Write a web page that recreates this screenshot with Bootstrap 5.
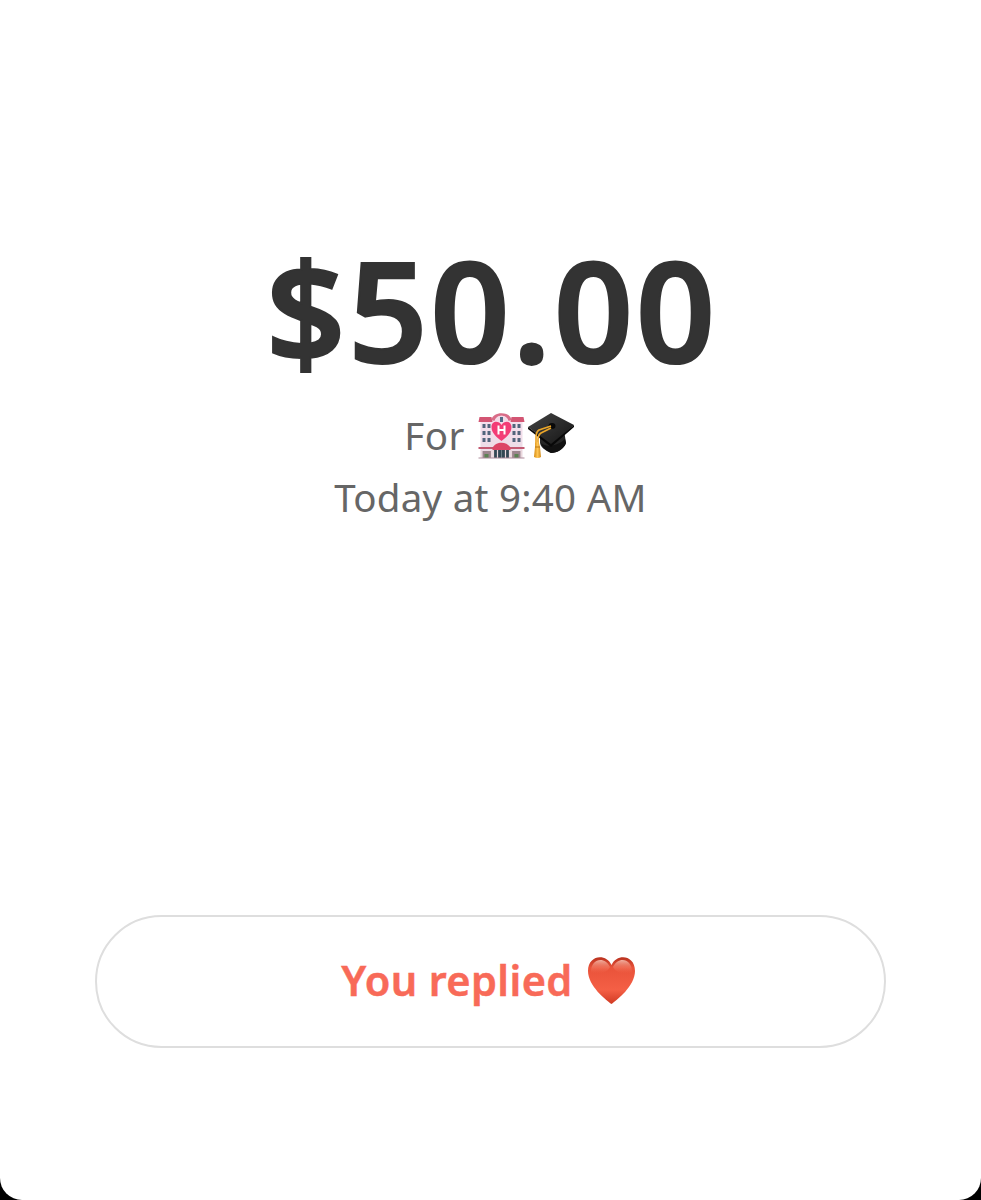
<!DOCTYPE html>
<html lang="en">
<head>
<meta charset="utf-8">
<meta name="viewport" content="width=device-width, initial-scale=1">
<title>Payment</title>
<link href="https://cdn.jsdelivr.net/npm/bootstrap@5.3.0/dist/css/bootstrap.min.css" rel="stylesheet">
<style>
body{background:#000;font-family:"Noto Sans","Open Sans",sans-serif}
.sheet{height:1200px;border-radius:0 0 22px 22px;overflow:hidden;padding:238px 95px 0}
.amount{font-size:139px;line-height:142px;height:142px;font-weight:600;color:#333;letter-spacing:2.7px;padding-left:3px;-webkit-text-stroke:2px #333}
.details{font-size:38.5px;line-height:61px;color:#666;margin-top:25px}
.note-line{height:61px;padding-right:1px}
.for-label{letter-spacing:.5px;margin-right:12px}
.when{letter-spacing:.25px;padding-top:1px}
.reply{height:133px;margin-top:387px;border:2px solid #dedede;color:#f86a58;font-size:41.5px;line-height:60px;font-weight:600;--bs-btn-hover-color:#f86a58;-webkit-text-stroke:.5px #f86a58}
.reply svg{margin-left:14px;margin-right:3px;margin-bottom:1px}
.reply-text{letter-spacing:.4px;padding-bottom:4px}
</style>
</head>
<body>
<main class="sheet bg-white d-flex flex-column text-center">
  <h1 class="amount mb-0 text-nowrap">$50.00</h1>
  <div class="details">
    <div class="note-line d-flex justify-content-center align-items-center">
      <span class="for-label">For</span>
      <svg width="49" height="48" viewBox="0 0 48 48" role="img" aria-label="Hospital">
        <defs><linearGradient id="wall" x2="0" y2="1"><stop stop-color="#f8dfee"/><stop offset="1" stop-color="#eadbe5"/></linearGradient></defs>
        <path d="M3 8h13C17 0 31 0 32 8h13v38H3z" fill="url(#wall)"/>
        <path d="M2 5h12l1 5H1zM34 5h12l1 5H33z" fill="#d35573"/>
        <path d="M14 8C15-1 33-1 34 8l-3 1C29 2 19 2 17 9z" fill="#d96c88"/>
        <path d="M17 9C19 2 29 2 31 9z" fill="#f3dbe8"/>
        <rect x="22.5" y="5" width="3" height="5" fill="#526b88"/>
        <g fill="#52647c"><path d="M5 12h3v4H5zM10 12h3v4h-3zM5 19h3v4H5zM10 19h3v4h-3zM5 26h3v4H5zM10 26h3v4h-3zM35 12h3v4h-3zM40 12h3v4h-3zM35 19h3v4h-3zM40 19h3v4h-3zM35 26h3v4h-3zM40 26h3v4h-3z"/></g>
        <path d="M24 29C19 25 14 21 14 15c0-6 7-7 10-2 3-5 10-4 10 2 0 6-5 10-10 14z" fill="#f33c76"/>
        <path d="M21 13.5v9M27 13.5v9M21 18h6" fill="none" stroke="#fff" stroke-width="2"/>
        <path d="M1 35h15v2H1zM32 35h15v2H32z" fill="#c35a72"/>
        <path d="M15 36c3-7 15-7 18 0v2H15z" fill="#dc4566"/>
        <path d="M5 39h9v7H5zM34 39h9v7h-9z" fill="#9c858d"/>
        <path d="M16 38h16v8H16z" fill="#344854"/>
        <path d="M16 38v8M20 38v8M28 38v8M32 38v8M4 38v8M14 38v8M34 38v8M44 38v8" stroke="#ead8dc" stroke-width="1.2"/>
        <path d="M24 38v8" stroke="#8a9ba1" stroke-width=".7"/>
        <path d="M7 46v-4h4v4zM37 46v-4h4v4z" fill="#5b8252"/>
        <path d="M1 46h46" stroke="#ad8c9b"/>
      </svg>
      <svg width="50" height="48" viewBox="0 0 50 48" role="img" aria-label="Graduation cap">
        <defs><linearGradient id="cap" x2="1" y2="1"><stop stop-color="#444"/><stop offset="1" stop-color="#141414"/></linearGradient><linearGradient id="gold"><stop stop-color="#d58a10"/><stop offset=".5" stop-color="#ffc553"/><stop offset="1" stop-color="#d18a18"/></linearGradient></defs>
        <path d="M14 24l24-6 2 13c-2 6-9 10-15 10-6-3-10-5-11-10z" fill="#262626"/>
        <path d="M15 31c5 5 17 3 24-4l1 4c-2 6-9 10-15 10-6-3-9-6-10-10z" fill="#111"/>
        <path d="M2 15L25 1l23 12-22 20z" fill="url(#cap)"/>
        <path d="M2 15l23 17 23-19v2L25 35 2 17z" fill="#080808"/>
        <ellipse cx="26" cy="14" rx="3.5" ry="3" fill="#090909"/>
        <path d="M25 14l-12 4q-3 2-3 7v6M25 16l-10 5q-3 2-3 7v4" fill="none" stroke="#eba629" stroke-width="1.7"/>
        <path d="M9 31q2-2 4 0l1 4 1 10q-3 2-7 0l1-10z" fill="url(#gold)"/>
        <path d="M9 35h5" stroke="#b97712"/>
      </svg>
    </div>
    <div class="when">Today at 9:40 AM</div>
  </div>
  <button type="button" class="reply btn rounded-pill w-100 d-flex justify-content-center align-items-center p-0">
    <span class="reply-text">You replied</span>
    <svg width="50" height="48" viewBox="0 0 50 48" role="img" aria-label="Heart">
      <defs><linearGradient id="heart" x2="0" y2="1"><stop stop-color="#b9311e"/><stop offset=".22" stop-color="#e9533a"/><stop offset=".7" stop-color="#f45f45"/><stop offset="1" stop-color="#d13a23"/></linearGradient><linearGradient id="shine" x2="0" y2="1"><stop stop-color="#ffd6c8" stop-opacity=".75"/><stop offset="1" stop-color="#f66b50" stop-opacity="0"/></linearGradient></defs>
      <path d="M24.5 47C19 43 1 29 1 14 1-2 19-4 24.500 8 30-4 48-2 48 14c0 15-18 29-23.500 33z" fill="url(#heart)"/>
      <path d="M4 15C4 1 18-1 23 10c-3 7-15 8-19 5zM26 10C31-1 45 1 45 15c-4 3-16 2-19-5z" fill="url(#shine)"/>
    </svg>
  </button>
</main>
<script src="https://cdn.jsdelivr.net/npm/bootstrap@5.3.0/dist/js/bootstrap.bundle.min.js"></script>
</body>
</html>
